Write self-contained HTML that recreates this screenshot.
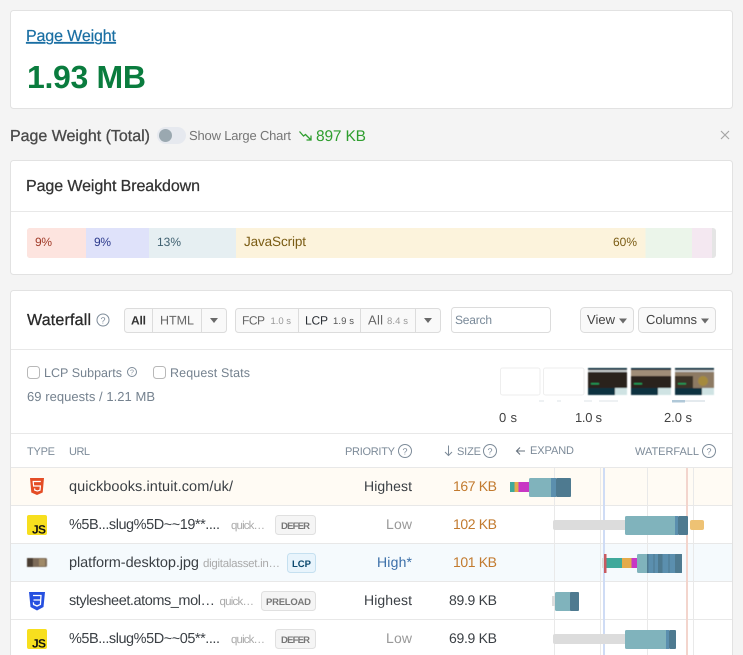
<!DOCTYPE html>
<html lang="en"><head><meta charset="utf-8"><title>Page Weight</title>
<style>
html,body{margin:0;padding:0;background:#f4f4f4;width:743px;height:655px;overflow:hidden}
svg{display:block;font-family:"Liberation Sans",sans-serif;text-rendering:geometricPrecision}
.card{fill:#fff;stroke:#e2e2e2;stroke-width:1}
.dv{stroke:#e8e8e8;stroke-width:1}
.h{font-size:11px;fill:#7d8b99}
.u{font-size:14.500px;fill:#3a3f44}
.d{font-size:11.500px;fill:#aaa}
.bt{font-size:9.500px;font-weight:bold;fill:#777}
.q{fill:none;stroke:#7d8b99;stroke-width:1}
.qt{font-size:9px;fill:#7d8b99;text-anchor:middle}
.btn{fill:#f9f9f9;stroke:#dcdcdc}
.ar{fill:#6a6a6a}
.s{font-size:14px;fill:#c27a2e}
.p{font-size:14px;fill:#3a3f44}
.l{font-size:14px;fill:#999}
.g{fill:#dcdcdc}.a{fill:#80b3bc}.b{fill:#5b8fae}.c{fill:#4e7a90}
</style></head><body>
<svg width="743" height="655" viewBox="0 0 743 655" xmlns="http://www.w3.org/2000/svg">
<defs><filter id="bl" x="-5%" y="-5%" width="110%" height="110%"><feGaussianBlur stdDeviation=".45"/></filter></defs>
<!-- Card 1 -->
<rect class="card" x="10.500" y="10.500" width="722" height="98" rx="3"/>
<text x="26" y="41" font-size="16" fill="#1a6fa3" stroke="#1a6fa3" stroke-width=".2" textLength="90" text-decoration="underline">Page Weight</text>
<text x="27" y="88" font-size="32" font-weight="bold" fill="#0a7c3e" textLength="119">1.93 MB</text>
<!-- Title line -->
<text x="10" y="141" font-size="16" fill="#4a4a4a" stroke="#4a4a4a" stroke-width=".3" textLength="140">Page Weight (Total)</text>
<rect x="157" y="127" width="29" height="17" rx="8.500" fill="#e6e9ef"/>
<circle cx="165.500" cy="135.500" r="6.500" fill="#9aa8b0"/>
<text x="189" y="140" font-size="13" fill="#767676" textLength="102">Show Large Chart</text>
<path d="M299.500 131.500l4 4.500 2-1.500 5 5M311 135.500v4.500h-4.500" fill="none" stroke="#2f9e2f" stroke-width="1.300"/>
<text x="316" y="141" font-size="15.500" fill="#2f9e2f" textLength="50">897 KB</text>
<path d="M721 131l8 8M729 131l-8 8" stroke="#a5a5a5" stroke-width="1.200"/>
<!-- Breakdown -->
<rect class="card" x="10.500" y="160.500" width="722" height="114" rx="3"/>
<text x="26" y="191" font-size="16" fill="#333" stroke="#333" stroke-width=".25" textLength="174">Page Weight Breakdown</text>
<line class="dv" x1="11" x2="732" y1="211.500" y2="211.500"/>
<rect x="27" y="228" width="689" height="30" rx="3" fill="#e5e5e5"/>
<path d="M30 228h56v30h-56a3 3 0 0 1-3-3v-24a3 3 0 0 1 3-3z" fill="#fde4df"/>
<rect x="86" y="228" width="63" height="30" fill="#dfe2fa"/>
<rect x="149" y="228" width="87" height="30" fill="#e6eff2"/>
<rect x="236" y="228" width="409.500" height="30" fill="#fcf3dc"/>
<rect x="645.500" y="228" width="46.500" height="30" fill="#ebf5ea"/>
<rect x="692" y="228" width="20" height="30" fill="#f4e8f1"/>
<text x="35" y="246" font-size="12" fill="#a03a28" textLength="17">9%</text>
<text x="94" y="246" font-size="12" fill="#2c3a8c" textLength="17">9%</text>
<text x="157" y="246" font-size="12" fill="#3f6070" textLength="24">13%</text>
<text x="244" y="246" font-size="13.500" fill="#7a5c14" textLength="62">JavaScript</text>
<text x="613" y="246" font-size="12" fill="#7a5c14" textLength="24">60%</text>
<!-- Waterfall card -->
<rect class="card" x="10.500" y="290.500" width="722" height="380" rx="3"/>
<text x="27" y="325" font-size="16" fill="#2a2a2a" stroke="#2a2a2a" stroke-width=".3" textLength="64">Waterfall</text>
<circle class="q" cx="103" cy="320" r="6"/><text class="qt" x="103" y="323.500">?</text>
<!-- group 1 -->
<rect class="btn" x="124.500" y="308.500" width="102" height="24" rx="3"/>
<line class="dv" style="stroke:#dcdcdc" x1="152.500" x2="152.500" y1="308" y2="333"/>
<line class="dv" style="stroke:#dcdcdc" x1="201.500" x2="201.500" y1="308" y2="333"/>
<text x="131" y="324.500" font-size="12" font-weight="bold" fill="#333" textLength="15">All</text>
<text x="160" y="324.500" font-size="12.500" fill="#666" textLength="34">HTML</text>
<path class="ar" d="M210 318h8l-4 5z"/>
<!-- group 2 -->
<rect class="btn" x="235.500" y="308.500" width="205" height="24" rx="3"/>
<line class="dv" style="stroke:#dcdcdc" x1="298.500" x2="298.500" y1="308" y2="333"/>
<line class="dv" style="stroke:#dcdcdc" x1="360.500" x2="360.500" y1="308" y2="333"/>
<line class="dv" style="stroke:#dcdcdc" x1="415.500" x2="415.500" y1="308" y2="333"/>
<text x="242" y="324.500" font-size="12" fill="#666" textLength="23">FCP</text>
<text x="270.500" y="324" font-size="9.500" fill="#999" textLength="20.500">1.0 s</text>
<text x="305" y="324.500" font-size="12" fill="#2a2f35" textLength="23">LCP</text>
<text x="333" y="324" font-size="9.500" fill="#555" textLength="21">1.9 s</text>
<text x="368" y="324.500" font-size="13" fill="#666" textLength="15">All</text>
<text x="387" y="324" font-size="9.500" fill="#999" textLength="21">8.4 s</text>
<path class="ar" d="M424 318h8l-4 5z"/>
<!-- search -->
<rect x="451.500" y="307.500" width="99" height="25" rx="3" fill="#fff" stroke="#dcdcdc"/>
<text x="455" y="324" font-size="12" fill="#7a8a99" textLength="37">Search</text>
<!-- view/columns -->
<rect class="btn" x="580.500" y="307.500" width="53" height="25" rx="4"/>
<text x="587" y="324" font-size="13" fill="#444" textLength="28">View</text>
<path class="ar" d="M619 318.500h8l-4 5z"/>
<rect class="btn" x="638.500" y="307.500" width="77" height="25" rx="4"/>
<text x="646" y="324" font-size="13" fill="#444" textLength="51">Columns</text>
<path class="ar" d="M701 318.500h8l-4 5z"/>
<line class="dv" x1="11" x2="732" y1="349.500" y2="349.500"/>
<!-- options -->
<rect x="27.500" y="366.500" width="12" height="12" rx="3" fill="#fff" stroke="#b8b8b8"/>
<text x="44" y="377" font-size="12.500" fill="#75828f" textLength="78">LCP Subparts</text>
<circle class="q" cx="132" cy="372" r="4.500"/><text class="qt" style="font-size:7px" x="132" y="374.500">?</text>
<rect x="153.500" y="366.500" width="12" height="12" rx="3" fill="#fff" stroke="#b8b8b8"/>
<text x="170" y="377" font-size="12.500" fill="#75828f" textLength="80">Request Stats</text>
<text x="27" y="401" font-size="13" fill="#75828f" textLength="128">69 requests / 1.21 MB</text>
<!-- filmstrip -->
<rect x="500.500" y="368" width="39.500" height="27" rx="2" fill="#fff" stroke="#eee"/>
<rect x="543.500" y="368" width="40.500" height="27" rx="2" fill="#fff" stroke="#eee"/>
<g filter="url(#bl)">
<rect x="588" y="368" width="39" height="27" rx="1" fill="#2b211a"/>
<rect x="588" y="368" width="39" height="2" fill="#0e3240"/><rect x="588" y="370" width="39" height="2" fill="#c8cccc"/>
<rect x="588" y="388" width="39" height="7" fill="#0e3240"/><rect x="615" y="388" width="12" height="7" fill="#cfe3e3"/>
<rect x="591" y="383" width="8" height="1.500" fill="#1e9e5a"/>
<rect x="631" y="368" width="40" height="27" rx="1" fill="#2b211a"/>
<rect x="631" y="368" width="40" height="2" fill="#0e3240"/><rect x="631" y="370" width="40" height="6" fill="#a08d78"/>
<rect x="631" y="388" width="40" height="7" fill="#0e3240"/><rect x="658" y="388" width="13" height="7" fill="#cfe3e3"/>
<rect x="634" y="383" width="8" height="1.500" fill="#1e9e5a"/>
<rect x="675" y="368" width="39" height="27" rx="1" fill="#8d7a64"/>
<rect x="675" y="368" width="39" height="2" fill="#0e3240"/><rect x="675" y="370" width="39" height="2" fill="#c8cccc"/>
<rect x="675" y="376" width="18" height="12" fill="#3a3028"/><circle cx="703" cy="381" r="5" fill="#a58a3e"/>
<rect x="675" y="388" width="39" height="7" fill="#0e3240"/><rect x="702" y="388" width="12" height="7" fill="#cfe3e3"/>
<rect x="678" y="383" width="8" height="1.500" fill="#1e9e5a"/>
</g>
<g fill="#eef1f3">
<rect x="539" y="400" width="5" height="2"/><rect x="557" y="400" width="4" height="2"/><rect x="584" y="400" width="8" height="2"/><rect x="599" y="400" width="19" height="2"/><rect x="685" y="400" width="20" height="2" fill="#e4eaee"/>
<rect x="672" y="400" width="13" height="2.500" fill="#b0c8d8"/>
</g>
<text x="499" y="422" font-size="13" fill="#444" textLength="18">0 s</text>
<text x="575" y="422" font-size="13" fill="#444" textLength="27">1.0 s</text>
<text x="664" y="422" font-size="13" fill="#444" textLength="28">2.0 s</text>
<line class="dv" x1="11" x2="732" y1="433.500" y2="433.500"/>
<!-- table head -->
<text class="h" x="27" y="455" textLength="28">TYPE</text>
<text class="h" x="69" y="455" textLength="21">URL</text>
<text class="h" x="345" y="455" textLength="50">PRIORITY</text>
<circle class="q" cx="405" cy="451" r="6.500"/><text class="qt" x="405" y="454.500">?</text>
<path d="M448.500 445.500v10M445 452l3.500 3.500 3.500-3.500" fill="none" stroke="#7d8b99" stroke-width="1"/>
<text class="h" x="457" y="455" textLength="24">SIZE</text>
<circle class="q" cx="490" cy="451" r="6.500"/><text class="qt" x="490" y="454.500">?</text>
<path d="M525 451h-8.500M520 447.500l-3.500 3.500 3.500 3.500" fill="none" stroke="#66727e" stroke-width="1.100"/>
<text class="h" x="530" y="454" textLength="44">EXPAND</text>
<text class="h" x="635" y="455" textLength="64">WATERFALL</text>
<circle class="q" cx="709" cy="451" r="6.500"/><text class="qt" x="709" y="454.500">?</text>
<!-- rows -->
<rect x="11" y="468" width="721" height="37" fill="#fffbf4"/>
<rect x="11" y="544" width="721" height="37" fill="#f5fafd"/>
<line class="dv" x1="11" x2="732" y1="467.500" y2="467.500"/>
<line class="dv" x1="11" x2="732" y1="505.500" y2="505.500"/>
<line class="dv" x1="11" x2="732" y1="543.500" y2="543.500"/>
<line class="dv" x1="11" x2="732" y1="581.500" y2="581.500"/>
<line class="dv" x1="11" x2="732" y1="619.500" y2="619.500"/>
<!-- guides -->
<g stroke="#e9e9e9" stroke-width="1">
<line x1="554.500" x2="554.500" y1="468" y2="655"/><line x1="600.500" x2="600.500" y1="468" y2="655"/>
<line x1="647.500" x2="647.500" y1="468" y2="655"/><line x1="693.500" x2="693.500" y1="468" y2="655"/>
</g>
<rect x="603" y="468" width="2" height="187" fill="#cfdcf5"/>
<rect x="686" y="468" width="2" height="187" fill="#f3d5cd"/>
<!-- type icons -->
<path d="M30 478h14l-1.300 14.500-5.700 2.500-5.700-2.500z" fill="#e44d26"/>
<path d="M40.800 481.500h-7.600l.4 4.500h6.800l-.4 4.200-2.600.8-2.600-.8-.2-1.800" fill="none" stroke="#fff" stroke-width="1.200"/>
<rect x="27" y="515" width="20" height="20" rx="2" fill="#f7df1e"/>
<text x="32" y="533.500" font-size="12" font-weight="bold" fill="#111" textLength="14">JS</text>
<g filter="url(#bl)">
<rect x="27" y="558" width="20" height="9" rx="1.500" fill="#7c6a58"/>
<rect x="27" y="558" width="6" height="9" fill="#4a3c30"/><rect x="39" y="559" width="6" height="7" fill="#a08a68"/>
</g>
<path d="M29 592h16l-1.500 15-6.500 3.500-6.500-3.500z" fill="#2650e0"/>
<path d="M33 595.500h8l-.6 9-3.400 1.500-3.400-1.500-.2-2.200M33.500 600h7" fill="none" stroke="#fff" stroke-width="1.300"/>
<rect x="27" y="629" width="20" height="20" rx="2" fill="#f7df1e"/>
<text x="32" y="647.500" font-size="12" font-weight="bold" fill="#111" textLength="14">JS</text>
<!-- url column -->
<text class="u" x="69" y="491" textLength="164">quickbooks.intuit.com/uk/</text>
<text class="u" x="69" y="529" textLength="151">%5B...slug%5D~~19**....</text>
<text class="d" x="231" y="529" textLength="34">quick…</text>
<rect x="275.500" y="515.500" width="40" height="19" rx="3" fill="#f5f5f5" stroke="#e0e0e0"/>
<text class="bt" x="281" y="529" textLength="29">DEFER</text>
<text class="u" x="69" y="567" textLength="130">platform-desktop.jpg</text>
<text class="d" x="203" y="567" textLength="77">digitalasset.in…</text>
<rect x="287.500" y="553.500" width="28" height="19" rx="3" fill="#e8f4fc" stroke="#c5e0f0"/>
<text class="bt" style="fill:#0d4a6f" x="292" y="567" textLength="19">LCP</text>
<text class="u" x="69" y="605" textLength="146">stylesheet.atoms_mol…</text>
<text class="d" x="219.500" y="605" textLength="34.500">quick…</text>
<rect x="261.500" y="591.500" width="54" height="19" rx="3" fill="#f5f5f5" stroke="#e0e0e0"/>
<text class="bt" x="266" y="605" textLength="45">PRELOAD</text>
<text class="u" x="69" y="643" textLength="151">%5B...slug%5D~~05**....</text>
<text class="d" x="231" y="643" textLength="34">quick…</text>
<rect x="275.500" y="629.500" width="40" height="19" rx="3" fill="#f5f5f5" stroke="#e0e0e0"/>
<text class="bt" x="281" y="643" textLength="29">DEFER</text>
<!-- priority -->
<text class="p" x="364" y="491" textLength="48">Highest</text>
<text class="l" x="386" y="529" textLength="26">Low</text>
<text class="p" style="fill:#3a6ea8" x="377" y="567" textLength="35">High*</text>
<text class="p" x="364" y="605" textLength="48">Highest</text>
<text class="l" x="386" y="643" textLength="26">Low</text>
<!-- size -->
<text class="s" x="453" y="491" textLength="44">167 KB</text>
<text class="s" x="453" y="529" textLength="44">102 KB</text>
<text class="s" x="453" y="567" textLength="44">101 KB</text>
<text class="p" x="449" y="605" textLength="48">89.9 KB</text>
<text class="p" x="449" y="643" textLength="48">69.9 KB</text>
<!-- bars row 1 -->
<rect x="510" y="482" width="4.500" height="10" fill="#3fa99b"/><rect x="514.500" y="482" width="4" height="10" fill="#e5ab4b"/><rect x="518.500" y="482" width="11" height="10" fill="#c837c4"/>
<rect class="a" x="529" y="478" width="24" height="19" rx="1.500"/><rect class="b" x="551" y="478" width="5" height="19"/><rect class="c" x="556" y="478" width="15" height="19" rx="1"/>
<!-- row 2 -->
<rect class="g" x="553" y="520" width="74" height="10" rx="2"/>
<rect class="a" x="625" y="516" width="52" height="19" rx="1.500"/><rect class="b" x="675" y="516" width="3" height="19"/><rect class="c" x="678" y="516" width="10" height="19" rx="1"/>
<rect x="690" y="520" width="14" height="10" rx="2" fill="#eec274"/>
<!-- row 3 -->
<rect class="g" x="602" y="558" width="3" height="10"/>
<rect x="606" y="558" width="16" height="10" fill="#3fa99b"/><rect x="622" y="558" width="9.500" height="10" fill="#e5ab4b"/><rect x="631.500" y="558" width="6" height="10" fill="#c837c4"/>
<rect x="604" y="554" width="2.500" height="19" fill="#c85a60"/>
<rect class="a" x="637" y="554" width="11" height="19" rx="1.500"/>
<rect class="b" x="647" y="554" width="35" height="19"/>
<rect class="c" x="647" y="554" width="1.500" height="19"/><rect class="c" x="653.500" y="554" width="1" height="19"/><rect class="c" x="658" y="554" width="4.500" height="19"/><rect class="c" x="668.500" y="554" width="1" height="19"/><rect class="c" x="675" y="554" width="7" height="19" rx="1"/>
<!-- row 4 -->
<rect class="g" x="552" y="596" width="4" height="10"/>
<rect class="a" x="555" y="592" width="16" height="19" rx="1.500"/><rect class="c" x="570" y="592" width="9" height="19" rx="1"/>
<!-- row 5 -->
<rect class="g" x="553" y="634" width="74" height="10" rx="2"/>
<rect class="a" x="625" y="630" width="43" height="19" rx="1.500"/><rect class="b" x="666" y="630" width="3" height="19"/><rect class="c" x="669" y="630" width="7" height="19" rx="1"/>
</svg>
</body></html>
